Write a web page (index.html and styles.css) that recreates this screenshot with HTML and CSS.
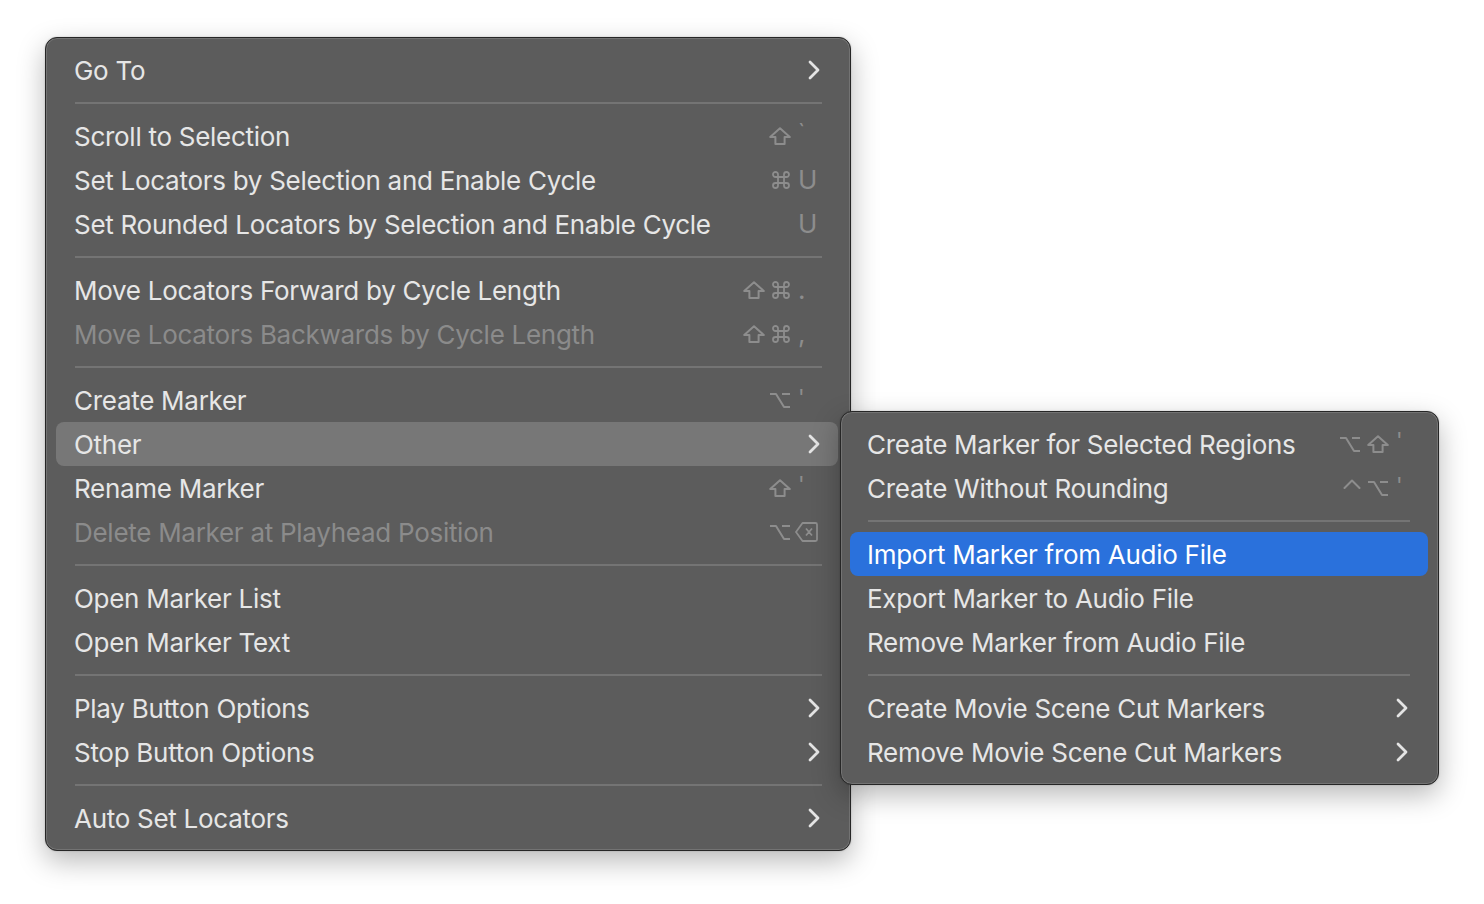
FILE: index.html
```html
<!DOCTYPE html>
<html>
<head>
<meta charset="utf-8">
<link rel="stylesheet" href="styles.css">
</head>
<body>
<svg width="0" height="0" class="defs">
  <defs>
    <symbol id="i-shift" viewBox="0 0 22 18"><path d="M11 1.2 L20.8 10 H15.6 V17 H6.4 V10 H1.2 Z" fill="none" stroke="currentColor" stroke-width="2" stroke-linejoin="round"/></symbol>
    <symbol id="i-cmd" viewBox="0 0 20 20"><path d="M7 7 V4.5 A2.5 2.5 0 1 0 4.5 7 H15.5 A2.5 2.5 0 1 0 13 4.5 V15.5 A2.5 2.5 0 1 0 15.5 13 H4.5 A2.5 2.5 0 1 0 7 15.5 Z" fill="none" stroke="currentColor" stroke-width="1.8" stroke-linejoin="round"/></symbol>
    <symbol id="i-opt" viewBox="0 0 22 16"><path d="M1 2 H7 L15 15 H21 M13 2 H21" fill="none" stroke="currentColor" stroke-width="2" stroke-linejoin="round"/></symbol>
    <symbol id="i-ctrl" viewBox="0 0 18 10"><path d="M1.5 9 L9 1.5 L16.5 9" fill="none" stroke="currentColor" stroke-width="2" stroke-linejoin="round" stroke-linecap="round"/></symbol>
    <symbol id="i-del" viewBox="0 0 23 20"><path d="M7.5 1 H20.5 A1.5 1.5 0 0 1 22 2.5 V17.5 A1.5 1.5 0 0 1 20.5 19 H7.5 L1 10 Z M11 6.5 L17 13.5 M17 6.5 L11 13.5" fill="none" stroke="currentColor" stroke-width="1.8" stroke-linejoin="round"/></symbol>
    <symbol id="i-chev" viewBox="0 0 12 20"><path d="M2 2 L10 10 L2 18" fill="none" stroke="currentColor" stroke-width="2.8" stroke-linejoin="round" stroke-linecap="round"/></symbol>
  </defs>
</svg>

<div class="canvas">
  <div class="menu main">
    <div class="row"><span class="label">Go To</span><svg class="chev"><use href="#i-chev"/></svg></div>
    <div class="sep"></div>
    <div class="row"><span class="label">Scroll to Selection</span><span class="sc"><span class="mods"><svg class="g shift"><use href="#i-shift"/></svg></span><span class="key tick">`</span></span></div>
    <div class="row"><span class="label">Set Locators by Selection and Enable Cycle</span><span class="sc"><span class="mods"><svg class="g cmd"><use href="#i-cmd"/></svg></span><span class="key">U</span></span></div>
    <div class="row"><span class="label">Set Rounded Locators by Selection and Enable Cycle</span><span class="sc"><span class="mods"></span><span class="key">U</span></span></div>
    <div class="sep"></div>
    <div class="row"><span class="label">Move Locators Forward by Cycle Length</span><span class="sc"><span class="mods"><svg class="g shift"><use href="#i-shift"/></svg><svg class="g cmd"><use href="#i-cmd"/></svg></span><span class="key">.</span></span></div>
    <div class="row disabled"><span class="label">Move Locators Backwards by Cycle Length</span><span class="sc"><span class="mods"><svg class="g shift"><use href="#i-shift"/></svg><svg class="g cmd"><use href="#i-cmd"/></svg></span><span class="key">,</span></span></div>
    <div class="sep"></div>
    <div class="row"><span class="label">Create Marker</span><span class="sc"><span class="mods"><svg class="g opt"><use href="#i-opt"/></svg></span><span class="key tick">'</span></span></div>
    <div class="row open"><span class="label">Other</span><svg class="chev"><use href="#i-chev"/></svg></div>
    <div class="row"><span class="label">Rename Marker</span><span class="sc"><span class="mods"><svg class="g shift"><use href="#i-shift"/></svg></span><span class="key tick">'</span></span></div>
    <div class="row disabled"><span class="label">Delete Marker at Playhead Position</span><span class="sc"><span class="mods"><svg class="g opt"><use href="#i-opt"/></svg></span><span class="key"><svg class="g del"><use href="#i-del"/></svg></span></span></div>
    <div class="sep"></div>
    <div class="row"><span class="label">Open Marker List</span></div>
    <div class="row"><span class="label">Open Marker Text</span></div>
    <div class="sep"></div>
    <div class="row"><span class="label">Play Button Options</span><svg class="chev"><use href="#i-chev"/></svg></div>
    <div class="row"><span class="label">Stop Button Options</span><svg class="chev"><use href="#i-chev"/></svg></div>
    <div class="sep"></div>
    <div class="row"><span class="label">Auto Set Locators</span><svg class="chev"><use href="#i-chev"/></svg></div>
  </div>

  <div class="menu sub">
    <div class="row"><span class="label">Create Marker for Selected Regions</span><span class="sc"><span class="mods"><svg class="g opt"><use href="#i-opt"/></svg><svg class="g shift"><use href="#i-shift"/></svg></span><span class="key tick">'</span></span></div>
    <div class="row"><span class="label">Create Without Rounding</span><span class="sc"><span class="mods"><svg class="g ctrl"><use href="#i-ctrl"/></svg><svg class="g opt"><use href="#i-opt"/></svg></span><span class="key tick">'</span></span></div>
    <div class="sep"></div>
    <div class="row active"><span class="label">Import Marker from Audio File</span></div>
    <div class="row"><span class="label">Export Marker to Audio File</span></div>
    <div class="row"><span class="label">Remove Marker from Audio File</span></div>
    <div class="sep"></div>
    <div class="row"><span class="label">Create Movie Scene Cut Markers</span><svg class="chev"><use href="#i-chev"/></svg></div>
    <div class="row"><span class="label">Remove Movie Scene Cut Markers</span><svg class="chev"><use href="#i-chev"/></svg></div>
  </div>
</div>
</body>
</html>
```

FILE: styles.css
```css
* { box-sizing: border-box; }

html, body {
  margin: 0;
  padding: 0;
  background: #ffffff;
}

body {
  font-family: Inter, "Noto Sans", "Liberation Sans", sans-serif;
  font-size: 26px;
  color: #e6e6e6;
  width: 1484px;
  height: 904px;
  overflow: hidden;
}

.defs { position: absolute; width: 0; height: 0; }

.canvas {
  position: relative;
  width: 1484px;
  height: 904px;
  padding: 37px 0 0 45px;
}

.menu {
  background: #5c5c5c;
  border: 1px solid #262626;
  border-radius: 12px;
  box-shadow: inset 0 0 0 1px rgba(255, 255, 255, 0.14), 0 10px 28px rgba(0, 0, 0, 0.28), 0 0 2px rgba(0, 0, 0, 0.2);
  display: flex;
  flex-direction: column;
}

.main {
  width: 806px;
  padding: 10px 12px 10px 10px;
  --kw: 22px;
}

.sub {
  position: absolute;
  left: 840px;
  top: 411px;
  width: 599px;
  padding: 10px 10px 10px 9px;
  --kw: 12px;
}

.row {
  height: 44px;
  display: flex;
  align-items: center;
  padding: 0 18px 0 18px;
  border-radius: 8px;
  white-space: nowrap;
}

.sub .row { padding: 0 20px 0 17px; }

.label {
  flex: 1;
  letter-spacing: -0.28px;
}

.row.open { background: #777777; }
.row.active { background: #2a71dc; color: #ffffff; }
.row.disabled .label { color: #8b8b8b; }

.sep {
  height: 2px;
  margin: 10px 16px 10px 19px;
  background: #747474;
}

.sub .sep { margin: 10px 18px 10px 18px; }

.sc {
  display: flex;
  align-items: center;
  color: #8d8d8d;
}

.mods {
  display: flex;
  align-items: center;
  gap: 6px;
}

.key {
  width: var(--kw);
  margin-left: 7px;
  display: flex;
  align-items: center;
  font-size: 26px;
  line-height: 1;
}

.key.tick {
  align-self: flex-start;
  font-size: 22px;
  margin-top: -6px;
}

.g { display: block; }
.g.shift { width: 22px; height: 18px; }
.g.cmd { width: 20px; height: 20px; }
.g.opt { width: 22px; height: 16px; }
.g.ctrl { width: 18px; height: 10px; margin-top: -8px; }
.g.del { width: 23px; height: 20px; margin-left: -3px; }

.chev {
  width: 12px;
  height: 20px;
  color: #e4e4e4;
}
```
